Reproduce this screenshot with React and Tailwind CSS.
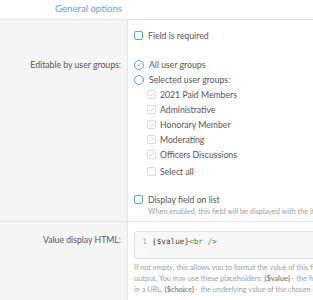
import React from "react";

const font = { fontFamily: 'Lato, "Open Sans", sans-serif' };
const mono = { fontFamily: '"DejaVu Sans Mono", monospace' };

const CheckBox = ({ disabled = false, checked = false }) => (
  <span
    className={`inline-flex items-center justify-center w-[9px] h-[9px] rounded-[2px] border shrink-0 ${
      disabled ? "border-[#dcdcdc] bg-white" : "border-[#5b9fd6] bg-white"
    }`}
  >
    {checked && (
      <svg viewBox="0 0 10 10" className="w-[7px] h-[7px]">
        <path d="M2 5.2l2 2 4-4.4" fill="none" stroke="#c8d0d8" strokeWidth="1.2" />
      </svg>
    )}
  </span>
);

const Radio = ({ checked = false }) => (
  <span className="inline-flex items-center justify-center w-[10px] h-[10px] rounded-full border border-[#5b9fd6] bg-white shrink-0">
    {checked && (
      <svg viewBox="0 0 10 10" className="w-[7px] h-[7px]">
        <path d="M2.2 5.2l1.8 1.8 3.8-4" fill="none" stroke="#5b9fd6" strokeWidth="1.2" />
      </svg>
    )}
  </span>
);

const groups = [
  "2021 Paid Members",
  "Administrative",
  "Honorary Member",
  "Moderating",
  "Officers Discussions",
];

export default function App() {
  return (
    <div className="w-[313px] h-[300px] overflow-hidden bg-white text-[8.7px] text-[#555]" style={font}>
      {/* Tab header */}
      <div className="h-[20px] flex border-b border-[#e4e4e4]">
        <div className="w-[128px] flex items-center justify-end pr-[6px] text-[9.6px] text-[#6aa3d6]">
          General options
        </div>
      </div>

      {/* Options row */}
      <div className="flex">
        <div className="w-[128px] shrink-0 bg-[#f5f5f5] border-r border-[#e4e4e4] flex flex-col items-end pr-[6px]">
          <div className="h-[37px]" />
          <div className="leading-[15px]">Editable by user groups:</div>
        </div>
        <div className="flex-1 pl-[6px] pt-[8px] pb-[4px] leading-[15px]">
          <div className="flex items-center gap-[5px] h-[15px]">
            <CheckBox />
            <span>Field is required</span>
          </div>
          <div className="h-[14px]" />
          <div className="flex items-center gap-[5px] h-[15px]">
            <Radio checked />
            <span>All user groups</span>
          </div>
          <div className="flex items-center gap-[5px] h-[15px]">
            <Radio />
            <span>Selected user groups:</span>
          </div>
          <div className="pl-[13px]">
            {groups.map((g) => (
              <div key={g} className="flex items-center gap-[4px] h-[15px]">
                <CheckBox disabled checked />
                <span>{g}</span>
              </div>
            ))}
            <div className="flex items-center gap-[4px] h-[15px] mt-[2px]">
              <CheckBox disabled />
              <span>Select all</span>
            </div>
          </div>
          <div className="h-[13px]" />
          <div className="flex items-center gap-[5px] h-[15px]">
            <CheckBox />
            <span>Display field on list</span>
          </div>
          <div className="pl-[14px] text-[7.3px] leading-[10px] text-[#a0a0a0] whitespace-nowrap">
            When enabled, this field will be displayed with the item in lists.
          </div>
        </div>
      </div>

      {/* Value display HTML row */}
      <div className="flex border-t border-[#e4e4e4]">
        <div className="w-[128px] shrink-0 bg-[#f5f5f5] border-r border-[#e4e4e4] flex justify-end pr-[6px] pt-[10px] h-[90px]">
          <span className="leading-[15px]">Value display HTML:</span>
        </div>
        <div className="flex-1 pl-[6px] pt-[9px]">
          <div className="h-[28px] flex border border-[#e0e0e0] border-r-0 rounded-l-[3px] bg-[#f9f9f9] overflow-hidden">
            <div className="w-[14px] pt-[2px] text-right text-[7.5px] leading-[15px] text-[#a0a0a0] pr-[2px]" style={mono}>
              1
            </div>
            <div className="flex-1 pl-[3px] pt-[2px] text-[7.7px] leading-[15px] whitespace-nowrap bg-[#f7f7f7]" style={mono}>
              <span className="text-[#444]">{"{$value}"}</span>
              <span className="text-[#3f9a3f]">{"<br />"}</span>
            </div>
          </div>
          <div className="mt-[3px] text-[7.3px] leading-[11px] text-[#a0a0a0] whitespace-nowrap">
            <div>If not empty, this allows you to format the value of this field for output.</div>
            <div>
              output. You may use these placeholders: <b className="text-[#888]">{"{$value}"}</b> - the field value,
            </div>
            <div>
              in a URL, <b className="text-[#888]">{"{$choice}"}</b> - the underlying value of the chosen option.
            </div>
          </div>
        </div>
      </div>
    </div>
  );
}
